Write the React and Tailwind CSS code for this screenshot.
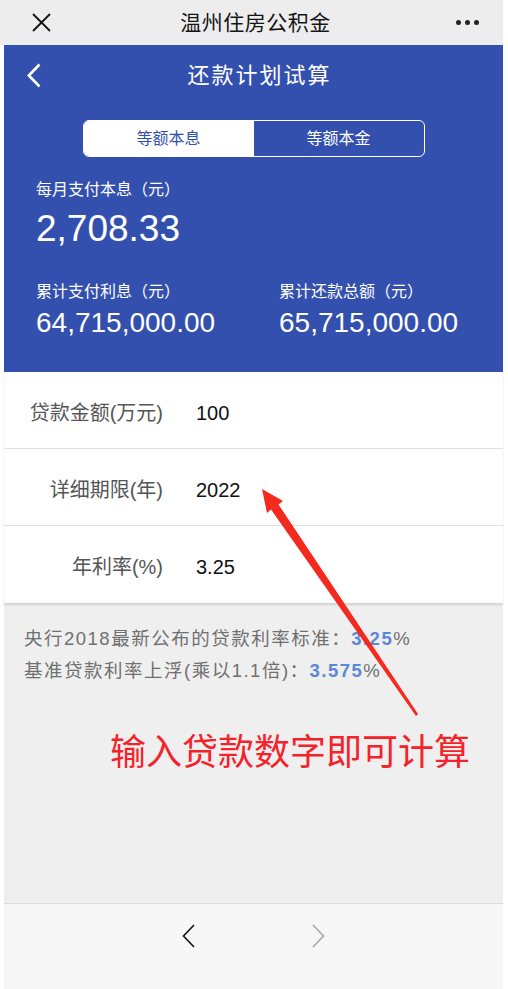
import React from "react";

const FONT = { fontFamily: '"Liberation Sans", "Noto Sans CJK SC", sans-serif' };

function Row({ label, value, last }) {
  return (
    <div className={`flex h-[77px] items-center pt-[5px] ${last ? "" : "border-b border-[#e1e1e1]"}`}>
      <div className="w-[159px] text-right text-[20px] text-[#555555]">{label}</div>
      <div className="ml-[33px] text-[20px] text-[#111111]">{value}</div>
    </div>
  );
}

export default function App() {
  return (
    <div className="relative w-[508px] h-[989px] overflow-hidden bg-white" style={FONT}>
      {/* WeChat top bar */}
      <div className="mr-[5px] flex h-[45px] items-center justify-between bg-[#ededed] px-[32px] pr-[24px]">
        <svg width="19" height="19" viewBox="0 0 19 19">
          <path d="M1 1 L18 18 M18 1 L1 18" stroke="#111" strokeWidth="1.8" fill="none" />
        </svg>
        <div className="text-[21px] tracking-[0.5px] text-[#151515] ml-[4px]">温州住房公积金</div>
        <div className="flex gap-[4px]">
          <span className="block h-[5px] w-[5px] rounded-full bg-[#222]" />
          <span className="block h-[5px] w-[5px] rounded-full bg-[#222]" />
          <span className="block h-[5px] w-[5px] rounded-full bg-[#222]" />
        </div>
      </div>

      <div className="ml-[4px] mr-[5px] flex h-[944px] flex-col">
        {/* Blue header */}
        <div className="bg-[#3350ae] pb-[32px] text-white">
          <div className="relative flex h-[60px] items-center justify-center">
            <svg className="absolute left-[23px] top-[18px]" width="14" height="25" viewBox="0 0 14 25">
              <path d="M12.5 1.5 L1.8 12.5 L12.5 23.5" stroke="#fff" strokeWidth="2.6" fill="none" />
            </svg>
            <div className="ml-[12px] text-[22px] tracking-[2px]">还款计划试算</div>
          </div>
          <div className="mx-auto mt-[15px] flex h-[37px] w-[342px] overflow-hidden rounded-[6px] border-[1.5px] border-white">
            <div className="flex flex-1 items-center justify-center bg-white text-[16px] text-[#3350ae]">等额本息</div>
            <div className="flex flex-1 items-center justify-center text-[16px] text-white">等额本金</div>
          </div>
          <div className="px-[32px]">
            <div className="mt-[21px] text-[16px] leading-[24px]">每月支付本息（元）</div>
            <div className="mt-[5px] text-[37px] leading-[44px]">2,708.33</div>
            <div className="mt-[29px] flex">
              <div className="w-[243px]">
                <div className="text-[16px] leading-[24px]">累计支付利息（元）</div>
                <div className="mt-[2px] text-[28px] leading-[34px]">64,715,000.00</div>
              </div>
              <div>
                <div className="text-[16px] leading-[24px]">累计还款总额（元）</div>
                <div className="mt-[2px] text-[28px] leading-[34px]">65,715,000.00</div>
              </div>
            </div>
          </div>
        </div>

        {/* Form */}
        <div className="bg-white shadow-[0_2px_2px_rgba(0,0,0,0.12)] relative z-10">
          <Row label="贷款金额(万元)" value="100" />
          <Row label="详细期限(年)" value="2022" />
          <Row label="年利率(%)" value="3.25" last />
        </div>

        {/* Gray info area */}
        <div className="flex-1 bg-[#efefef] px-[20px] pt-[20px]">
          <div className="text-[18.5px] leading-[32px] text-[#6f6f6f] tracking-[1.5px]">
            央行2018最新公布的贷款利率标准：<span className="font-bold text-[#5b87d8]">3.25</span>%
          </div>
          <div className="text-[18.5px] leading-[32px] text-[#6f6f6f] tracking-[1.5px]">
            基准贷款利率上浮(乘以1.1倍)：<span className="font-bold text-[#5b87d8]">3.575</span>%
          </div>
          <div className="mt-[44px] pl-[86px] text-[36px] leading-[44px] text-[#f5222a]">输入贷款数字即可计算</div>
        </div>

        {/* Bottom nav */}
        <div className="h-[86px] border-t border-[#dcdcdc] bg-[#f7f7f7]">
          <div className="flex h-[64px] items-center justify-center gap-[117px]">
            <svg width="13" height="24" viewBox="0 0 13 24">
              <path d="M12 1 L1.5 12 L12 23" stroke="#111" strokeWidth="1.6" fill="none" />
            </svg>
            <svg width="13" height="24" viewBox="0 0 13 24">
              <path d="M1 1 L11.5 12 L1 23" stroke="#a8a8a8" strokeWidth="1.6" fill="none" />
            </svg>
          </div>
        </div>
      </div>

      {/* Red annotation arrow */}
      <svg className="absolute left-0 top-0 z-20 pointer-events-none" width="508" height="989" viewBox="0 0 508 989">
        <polygon
          points="262,489 283,501 278.5,504.5 418,714 416,716 271,509.5 267,513"
          fill="#f42a1f"
        />
      </svg>
    </div>
  );
}
